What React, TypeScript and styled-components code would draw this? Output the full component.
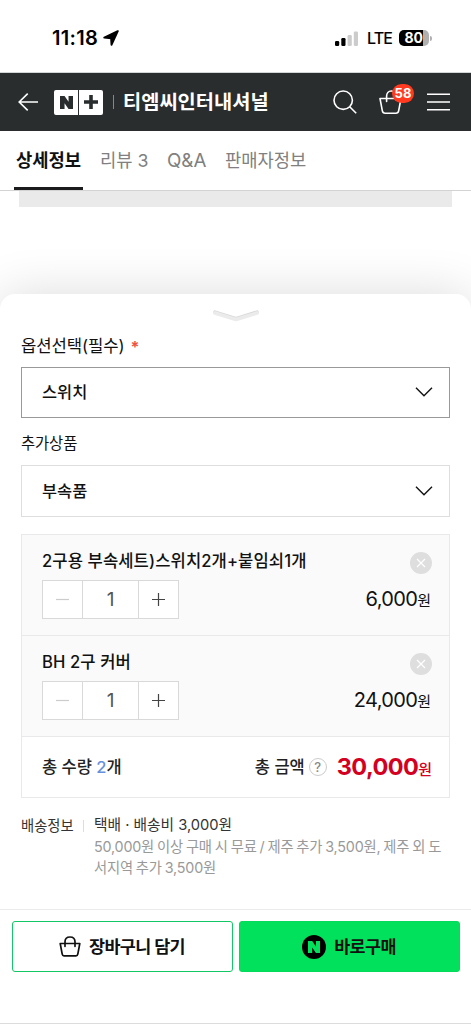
import React from "react";
import styled, { createGlobalStyle } from "styled-components";

const GlobalStyle = createGlobalStyle`
  *, *::before, *::after { box-sizing: border-box; }
  body {
    margin: 0;
    background: #fff;
    color: #111;
    font-family: Inter, "Noto Sans CJK KR", sans-serif;
    font-size: 16px;
    line-height: 20px;
  }
  button { font: inherit; color: inherit; background: none; border: 0; padding: 0; margin: 0; }
  svg { display: block; flex: none; }
`;

const Page = styled.div`
  width: 471px;
  height: 1024px;
  display: flex;
  flex-direction: column;
  overflow: hidden;
  background: #fff;
  white-space: nowrap;
`;

/* Status bar */
const StatusBar = styled.div`
  height: 73px;
  flex: none;
  display: flex;
  align-items: center;
  padding: 4px 39px 0 52px;
  border-bottom: 1px solid #d4d5d5;
`;
const Clock = styled.span`
  flex: 1;
  display: flex;
  align-items: center;
  gap: 5px;
  font-size: 20px;
  font-weight: 600;
  letter-spacing: 0.3px;
  color: #000;
`;
const Carrier = styled.span`
  margin-left: 9px;
  width: 24px;
  font-size: 16px;
  font-weight: 500;
  letter-spacing: -0.9px;
  color: #000;
`;
const Battery = styled.div`
  margin-left: 8px;
  width: 30px;
  height: 16px;
  border-radius: 5px;
  background: linear-gradient(90deg, #000 24px, #b0b0b0 24px);
  color: #fff;
  font-size: 14px;
  font-weight: 700;
  line-height: 16px;
  padding-left: 5.5px;
  letter-spacing: -0.2px;
`;
const BatteryTip = styled.div`
  width: 2px;
  height: 5px;
  margin-left: 1px;
  border-radius: 0 2px 2px 0;
  background: #b0b0b0;
`;

/* Store header */
const Header = styled.header`
  height: 58px;
  flex: none;
  display: flex;
  align-items: center;
  padding: 0 21px 0 18px;
  background: #292d2e;
  color: #fff;
`;
const Logo = styled.div`
  display: flex;
  gap: 1px;
  margin-left: 16px;
`;
const LogoTile = styled.div<{ $side: "left" | "right" }>`
  width: 24px;
  height: 25px;
  display: flex;
  align-items: center;
  justify-content: center;
  background: #fff;
  border-radius: ${(p) => (p.$side === "left" ? "2px 0 0 2px" : "0 2px 2px 0")};
`;
const HeaderDivider = styled.div`
  width: 1px;
  height: 14px;
  margin: 0 9px 0 10px;
  background: #85888a;
`;
const StoreName = styled.h1`
  margin: 0;
  font-size: 19.8px;
  font-weight: 700;
  line-height: 28px;
  flex: 1;
`;
const CartButton = styled.button`
  position: relative;
  margin: 0 25px 0 22px;
`;
const CartBadge = styled.span`
  position: absolute;
  top: -6px;
  left: 13px;
  width: 22px;
  height: 19px;
  border-radius: 10px;
  background: #ff3a20;
  color: #fff;
  font-size: 13px;
  font-weight: 700;
  line-height: 19px;
  text-align: center;
`;

/* Tabs */
const Tabs = styled.nav`
  height: 60px;
  flex: none;
  display: flex;
  padding-left: 14px;
  border-bottom: 1px solid #d3d3d3;
`;
const Tab = styled.button<{ $active?: boolean; $width: number }>`
  width: ${(p) => p.$width}px;
  height: 59px;
  padding: 4px 0 0 2px;
  text-align: left;
  font-size: 17.7px;
  font-weight: ${(p) => (p.$active ? 700 : 400)};
  color: ${(p) => (p.$active ? "#111" : "#808080")};
  border-bottom: ${(p) => (p.$active ? "3px solid #1b1b1d" : "3px solid transparent")};
  & + & { margin-left: 15px; }
`;
const LatinTabText = styled.span`
  font-size: 18.8px;
`;

const DetailPreview = styled.div`
  height: 103px;
  flex: none;
  padding: 0 19px;
`;
const DetailImage = styled.div`
  height: 16px;
  background: #eaeaea;
`;

/* Option sheet */
const Sheet = styled.section`
  position: relative;
  height: 615px;
  flex: none;
  display: flex;
  flex-direction: column;
  padding: 14px 21px 0;
  border-radius: 15px 15px 0 0;
  background: #fff;
  box-shadow: 0 0 50px rgba(0, 0, 0, 0.14);
`;
const Handle = styled.button`
  align-self: center;
  height: 15px;
`;
const FieldLabel = styled.label<{ $top: number; $size: number }>`
  display: flex;
  align-items: center;
  height: 20px;
  margin: ${(p) => p.$top}px 0 11px;
  font-size: ${(p) => p.$size}px;
  letter-spacing: -0.1px;
`;
const Required = styled.span`
  margin-left: 6px;
  color: #ee5145;
  font-size: 16px;
  font-weight: 700;
  height: 19px;
`;
const Select = styled.button<{ $active?: boolean }>`
  display: flex;
  align-items: center;
  justify-content: space-between;
  height: ${(p) => (p.$active ? 51 : 52)}px;
  flex: none;
  padding: 0 16px 1px 20px;
  border: 1px solid ${(p) => (p.$active ? "#999" : "#dedede")};
  font-size: 16.4px;
  font-weight: 500;
`;

const Summary = styled.div`
  height: 264px;
  flex: none;
  margin-top: 17px;
  border: 1px solid #e9e9ec;
`;
const Item = styled.div`
  height: 101px;
  display: flex;
  justify-content: space-between;
  padding: 16px 17px 0 20px;
  background: #fafafa;
  border-bottom: 1px solid #e9e9ec;
`;
const ItemInfo = styled.div`
  display: flex;
  flex-direction: column;
  gap: 9px;
`;
const ItemName = styled.div`
  font-size: 16.6px;
  font-weight: 500;
  height: 20px;
  letter-spacing: 0.09px;
`;
const Stepper = styled.div`
  display: flex;
  width: 137px;
  height: 39px;
  border: 1px solid #d9d9d9;
  background: #fff;
`;
const StepCell = styled.div<{ $width: number }>`
  width: ${(p) => p.$width}px;
  display: flex;
  align-items: center;
  justify-content: center;
  font-size: 19px;
  color: #555;
  & + & { border-left: 1px solid #d9d9d9; }
`;
const ItemSide = styled.div`
  display: flex;
  flex-direction: column;
  align-items: flex-end;
  padding-top: 1px;
  gap: 15px;
`;
const Price = styled.div`
  display: flex;
  align-items: baseline;
  padding-right: 1px;
  font-size: 20px;
  letter-spacing: -0.65px;
`;
const Won = styled.span<{ $bold?: boolean }>`
  font-size: 15px;
  letter-spacing: 0;
  font-weight: ${(p) => (p.$bold ? 500 : 400)};
`;
const Total = styled.div`
  height: 60px;
  display: flex;
  align-items: center;
  padding: 0 17px 0 20px;
  font-size: 16.5px;
  font-weight: 500;
  color: #222;
`;
const TotalCount = styled.span`
  flex: 1;
  b { color: #6590dd; font-weight: 500; }
`;
const Help = styled.span`
  width: 18px;
  height: 18px;
  margin: 0 10px 0 4px;
  border: 1px solid #ccc;
  border-radius: 50%;
  color: #888;
  font-size: 13px;
  line-height: 16px;
  text-align: center;
`;
const TotalPrice = styled.span`
  display: flex;
  align-items: baseline;
  padding-top: 2px;
  color: #d40022;
  font-size: 23.5px;
  font-weight: 700;
  letter-spacing: -0.6px;
`;

const Shipping = styled.div`
  display: flex;
  margin-top: 17px;
  font-size: 14.3px;
  line-height: 21px;
  color: #333;
`;
const ShippingLabel = styled.div`
  width: 62px;
`;
const ShippingDivider = styled.div`
  width: 1px;
  height: 12px;
  margin: 5px 10px 0 0;
  background: #ddd;
`;
const ShippingFee = styled.div`
  font-size: 14.7px;
`;
const ShippingNote = styled.div`
  color: #999;
  letter-spacing: -0.18px;
  word-spacing: -0.9px;
`;

/* Bottom actions */
const Actions = styled.footer`
  position: relative;
  height: 115px;
  flex: none;
  display: flex;
  gap: 6px;
  padding: 11px 11px 0 12px;
  background: #fff;
  border-top: 1px solid #ebebeb;
  border-bottom: 1px solid #dcdcdc;
`;
const ActionButton = styled.button<{ $primary?: boolean }>`
  width: 221px;
  height: 51px;
  display: flex;
  align-items: center;
  justify-content: center;
  gap: 8px;
  padding-right: 1px;
  border: 1px solid ${(p) => (p.$primary ? "#06da5c" : "#12c765")};
  border-radius: 3px;
  background: ${(p) => (p.$primary ? "#02e15c" : "#fff")};
  font-size: 17.4px;
  font-weight: 700;
  letter-spacing: -0.6px;
`;
const NBadge = styled.span`
  width: 24px;
  height: 24px;
  display: flex;
  align-items: center;
  justify-content: center;
  border-radius: 50%;
  background: #000;
`;

const LocationIcon = () => (
  <svg width="16" height="16" viewBox="0 0 16 16">
    <path d="M14.800 1.100 1.300 7.600l6.800.6.400 6.600Z" fill="#000" stroke="#000" strokeWidth="1.900" strokeLinejoin="round" />
  </svg>
);

const SignalIcon = () => (
  <svg width="23" height="15" viewBox="0 0 23 15">
    <rect x="0" y="10" width="4.2" height="5" rx="1.2" fill="#000" />
    <rect x="6.3" y="7" width="4.2" height="8" rx="1.2" fill="#000" />
    <rect x="12.6" y="4" width="4.2" height="11" rx="1.2" fill="#ccc" />
    <rect x="18.8" y="0.5" width="4.2" height="14.5" rx="1.2" fill="#ccc" />
  </svg>
);

const BackIcon = () => (
  <svg width="20" height="18" viewBox="0 0 20 18" fill="none" stroke="#fff" strokeWidth="1.6">
    <path d="M9.700.6 1.200 9l8.500 8.400M1.200 9H20" />
  </svg>
);

const NMark = ({ color, size = 12 }: { color: string; size?: number }) => (
  <svg width={size} height={size} viewBox="0 0 12 12" fill={color}>
    <path d="M0 0h4.200l3.700 5.400V0H12v12H7.900L4.200 6.600V12H0Z" />
  </svg>
);

const PlusLogo = () => (
  <svg width="14" height="14" viewBox="0 0 14 14" fill="none" stroke="#292d2e" strokeWidth="3.600">
    <path d="M7 0v14M0 7h14" />
  </svg>
);

const SearchIcon = () => (
  <svg width="24" height="24" viewBox="0 0 24 24" fill="none" stroke="#fff" strokeWidth="1.6">
    <circle cx="10.2" cy="10.2" r="9.2" />
    <path d="m16.7 16.7 6.5 6.5" />
  </svg>
);

const CartIcon = () => (
  <svg width="23" height="25" viewBox="0 0 23 25" fill="none" stroke="#fff" strokeWidth="1.6" strokeLinecap="round" strokeLinejoin="round">
    <path d="M11 8.500H1l2.300 12.200c.3 1.700 1.200 2.600 2.900 2.600h10.600c1.700 0 2.600-.9 2.900-2.600L22 8.500H11M7.600 11.500V6.300C7.600 3 9.500 1 12.200 1c2.700 0 4.300 2 4.300 5" />
  </svg>
);

const MenuIcon = () => (
  <svg width="23" height="18" viewBox="0 0 23 18" fill="none" stroke="#fff" strokeWidth="1.6">
    <path d="M0 1.300h23M0 9h23M0 16.700h23" />
  </svg>
);

const HandleIcon = () => (
  <svg width="48" height="14" viewBox="0 0 48 14" fill="none" strokeLinecap="round" strokeLinejoin="round">
    <path d="M3 3.200 24 9.600l21-6.400" stroke="#d8d8d8" strokeWidth="3.600" />
    <path d="M3 4 24 10.500l21-6.500" stroke="#ebebeb" strokeWidth="3.600" />
  </svg>
);

const ChevronIcon = () => (
  <svg width="18" height="10" viewBox="0 0 18 10" fill="none" stroke="#111" strokeWidth="1.400">
    <path d="m1 .7 8 8 8-8" />
  </svg>
);

const StepIcon = ({ plus }: { plus?: boolean }) => (
  <svg width="13" height="13" viewBox="0 0 13 13" fill="none" stroke={plus ? "#444" : "#ccc"} strokeWidth="1.200">
    <path d={plus ? "M0 6.500h13M6.500 0v13" : "M0 6.500h13"} />
  </svg>
);

const RemoveIcon = () => (
  <svg width="22" height="22" viewBox="0 0 22 22" fill="none">
    <circle cx="11" cy="11" r="11" fill="#dedede" />
    <path d="m7 7 8 8m0-8-8 8" stroke="#fff" strokeWidth="1.200" />
  </svg>
);

const BasketIcon = () => (
  <svg width="22" height="21" viewBox="0 0 22 21" fill="none" stroke="#111" strokeWidth="1.700" strokeLinecap="round" strokeLinejoin="round">
    <path d="M1.200 7.500h19.600l-2 10.700c-.2 1.100-.7 1.600-1.800 1.600H5c-1.100 0-1.600-.5-1.800-1.600L1.200 7.500ZM6 10.300V5.800C6 2.800 8 1 11 1s5 1.800 5 4.800v4.500" />
  </svg>
);

const items = [
  { name: "2구용 부속세트)스위치2개+붙임쇠1개", quantity: 1, price: "6,000" },
  { name: "BH 2구 커버", quantity: 1, price: "24,000" },
];

export default function App() {
  return (
    <>
      <GlobalStyle />
      <Page>
        <StatusBar>
          <Clock>11:18<LocationIcon /></Clock>
          <SignalIcon />
          <Carrier>LTE</Carrier>
          <Battery>80</Battery>
          <BatteryTip />
        </StatusBar>
        <Header>
          <BackIcon />
          <Logo>
            <LogoTile $side="left"><NMark color="#292d2e" size={13} /></LogoTile>
            <LogoTile $side="right"><PlusLogo /></LogoTile>
          </Logo>
          <HeaderDivider />
          <StoreName>티엠씨인터내셔널</StoreName>
          <SearchIcon />
          <CartButton>
            <CartIcon />
            <CartBadge>58</CartBadge>
          </CartButton>
          <MenuIcon />
        </Header>
        <Tabs>
          <Tab $active $width={69}>상세정보</Tab>
          <Tab $width={52}>리뷰 3</Tab>
          <Tab $width={43}><LatinTabText>Q&amp;A</LatinTabText></Tab>
          <Tab $width={90}>판매자정보</Tab>
        </Tabs>
        <DetailPreview>
          <DetailImage />
        </DetailPreview>
        <Sheet>
          <Handle><HandleIcon /></Handle>
          <FieldLabel $top={13} $size={16.7}>옵션선택(필수)<Required>*</Required></FieldLabel>
          <Select $active>스위치<ChevronIcon /></Select>
          <FieldLabel $top={16} $size={15.4}>추가상품</FieldLabel>
          <Select>부속품<ChevronIcon /></Select>
          <Summary>
            {items.map((item) => (
              <Item key={item.name}>
                <ItemInfo>
                  <ItemName>{item.name}</ItemName>
                  <Stepper>
                    <StepCell $width={39}><StepIcon /></StepCell>
                    <StepCell $width={56}>{item.quantity}</StepCell>
                    <StepCell $width={40}><StepIcon plus /></StepCell>
                  </Stepper>
                </ItemInfo>
                <ItemSide>
                  <RemoveIcon />
                  <Price>{item.price}<Won>원</Won></Price>
                </ItemSide>
              </Item>
            ))}
            <Total>
              <TotalCount>총 수량 <b>2</b>개</TotalCount>
              총 금액
              <Help>?</Help>
              <TotalPrice>30,000<Won $bold>원</Won></TotalPrice>
            </Total>
          </Summary>
          <Shipping>
            <ShippingLabel>배송정보</ShippingLabel>
            <ShippingDivider />
            <div>
              <ShippingFee>택배 · 배송비 3,000원</ShippingFee>
              <ShippingNote>
                50,000원 이상 구매 시 무료 / 제주 추가 3,500원, 제주 외 도
                <br />
                서지역 추가 3,500원
              </ShippingNote>
            </div>
          </Shipping>
        </Sheet>
        <Actions>
          <ActionButton><BasketIcon />장바구니 담기</ActionButton>
          <ActionButton $primary><NBadge><NMark color="#02e15c" /></NBadge>바로구매</ActionButton>
        </Actions>
      </Page>
    </>
  );
}
